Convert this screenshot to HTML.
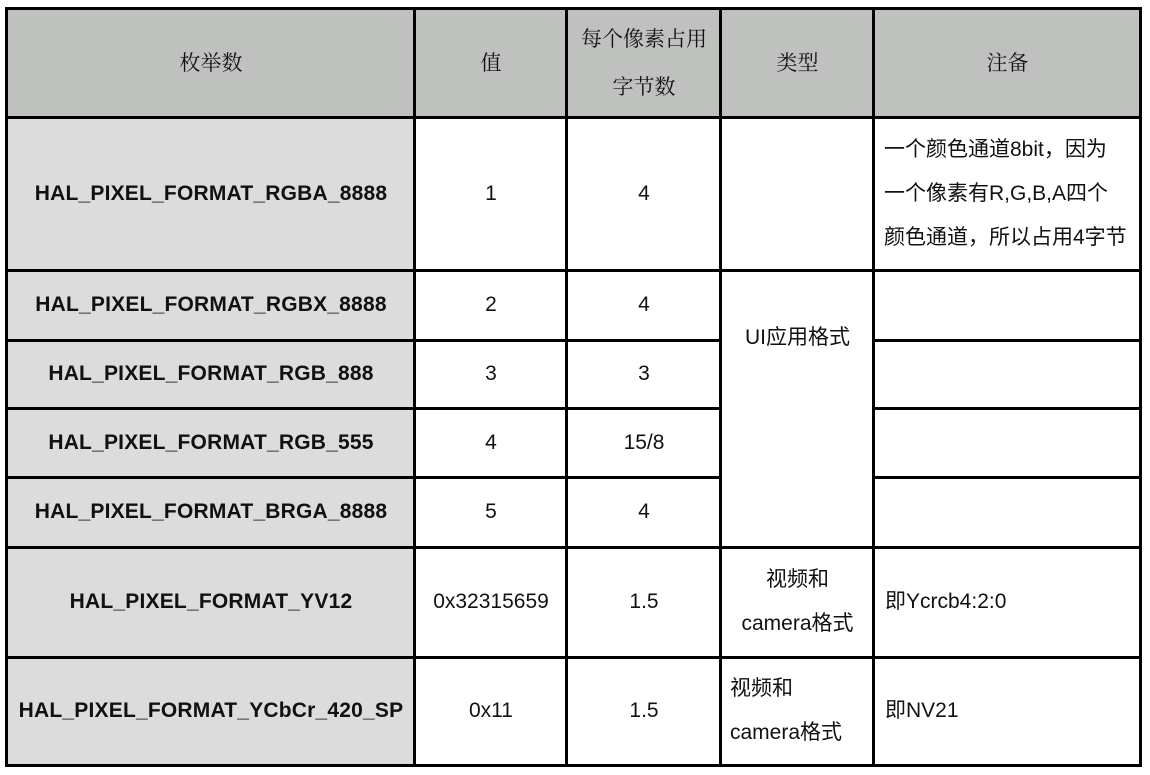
<!DOCTYPE html>
<html><head><meta charset="utf-8"><style>
html,body{margin:0;padding:0;background:#fff;width:1150px;height:775px;overflow:hidden;position:relative}
.c{position:absolute;display:flex;align-items:center;justify-content:center;text-align:center;box-sizing:border-box;font-family:"Liberation Sans","Noto Sans CJK SC",sans-serif;font-size:21px;color:#111;line-height:44px;white-space:nowrap}
.h{background:#bfc1bf;font-family:"Liberation Serif","Noto Serif CJK SC",serif;font-size:21px;line-height:48px}
.g{background:#dcdcdc;font-weight:bold;font-size:21px;letter-spacing:0.2px}
.l{justify-content:flex-start;text-align:left;padding-left:11px}
.v{position:absolute;background:#000;width:3px}
.hz{position:absolute;background:#000;height:3px}
</style></head><body>
<div class="c h" style="left:7px;top:8px;width:408px;height:109px">枚举数</div>
<div class="c h" style="left:415px;top:8px;width:152px;height:109px">值</div>
<div class="c h" style="left:567px;top:8px;width:154px;height:109px">每个像素占用<br>字节数</div>
<div class="c h" style="left:721px;top:8px;width:153px;height:109px">类型</div>
<div class="c h" style="left:874px;top:8px;width:267px;height:109px">注备</div>
<div class="c g" style="left:7px;top:117px;width:408px;height:153px">HAL_PIXEL_FORMAT_RGBA_8888</div>
<div class="c g" style="left:7px;top:270px;width:408px;height:70px">HAL_PIXEL_FORMAT_RGBX_8888</div>
<div class="c g" style="left:7px;top:340px;width:408px;height:68px">HAL_PIXEL_FORMAT_RGB_888</div>
<div class="c g" style="left:7px;top:408px;width:408px;height:69px">HAL_PIXEL_FORMAT_RGB_555</div>
<div class="c g" style="left:7px;top:477px;width:408px;height:70px">HAL_PIXEL_FORMAT_BRGA_8888</div>
<div class="c g" style="left:7px;top:547px;width:408px;height:110px">HAL_PIXEL_FORMAT_YV12</div>
<div class="c g" style="left:7px;top:657px;width:408px;height:108px">HAL_PIXEL_FORMAT_YCbCr_420_SP</div>
<div class="c" style="left:415px;top:117px;width:152px;height:153px">1</div>
<div class="c" style="left:415px;top:270px;width:152px;height:70px">2</div>
<div class="c" style="left:415px;top:340px;width:152px;height:68px">3</div>
<div class="c" style="left:415px;top:408px;width:152px;height:69px">4</div>
<div class="c" style="left:415px;top:477px;width:152px;height:70px">5</div>
<div class="c" style="left:415px;top:547px;width:152px;height:110px">0x32315659</div>
<div class="c" style="left:415px;top:657px;width:152px;height:108px">0x11</div>
<div class="c" style="left:567px;top:117px;width:154px;height:153px">4</div>
<div class="c" style="left:567px;top:270px;width:154px;height:70px">4</div>
<div class="c" style="left:567px;top:340px;width:154px;height:68px">3</div>
<div class="c" style="left:567px;top:408px;width:154px;height:69px">15/8</div>
<div class="c" style="left:567px;top:477px;width:154px;height:70px">4</div>
<div class="c" style="left:567px;top:547px;width:154px;height:110px">1.5</div>
<div class="c" style="left:567px;top:657px;width:154px;height:108px">1.5</div>
<div class="c" style="left:721px;top:117px;width:153px;height:430px;padding-top:12px">UI应用格式</div>
<div class="c" style="left:721px;top:547px;width:153px;height:110px">视频和<br>camera格式</div>
<div class="c l" style="left:721px;top:657px;width:153px;height:108px;padding-left:9px">视频和<br>camera格式</div>
<div class="c l" style="left:874px;top:117px;width:267px;height:153px;padding-left:10px">一个颜色通道8bit，因为<br>一个像素有R,G,B,A四个<br>颜色通道，所以占用4字节</div>
<div class="c l" style="left:874px;top:547px;width:267px;height:110px">即Ycrcb4:2:0</div>
<div class="c l" style="left:874px;top:657px;width:267px;height:108px">即NV21</div>
<div class="v" style="left:5px;top:7px;height:760px"></div>
<div class="v" style="left:413px;top:7px;height:760px"></div>
<div class="v" style="left:565px;top:7px;height:760px"></div>
<div class="v" style="left:719px;top:7px;height:760px"></div>
<div class="v" style="left:872px;top:7px;height:760px"></div>
<div class="v" style="left:1139px;top:7px;height:760px"></div>
<div class="hz" style="left:5px;top:7px;width:1137px"></div>
<div class="hz" style="left:5px;top:116px;width:1137px"></div>
<div class="hz" style="left:5px;top:269px;width:1137px"></div>
<div class="hz" style="left:5px;top:339px;width:716px"></div>
<div class="hz" style="left:5px;top:407px;width:716px"></div>
<div class="hz" style="left:5px;top:476px;width:716px"></div>
<div class="hz" style="left:872px;top:339px;width:270px"></div>
<div class="hz" style="left:872px;top:407px;width:270px"></div>
<div class="hz" style="left:872px;top:476px;width:270px"></div>
<div class="hz" style="left:5px;top:546px;width:1137px"></div>
<div class="hz" style="left:5px;top:656px;width:1137px"></div>
<div class="hz" style="left:5px;top:764px;width:1137px"></div>
</body></html>
